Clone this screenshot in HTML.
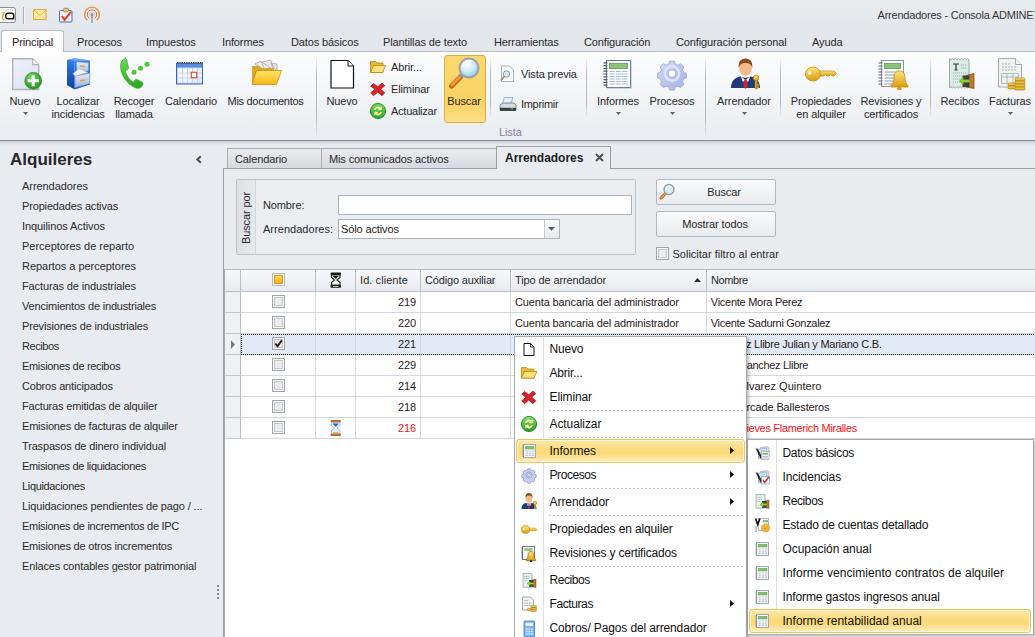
<!DOCTYPE html>
<html lang="es">
<head>
<meta charset="utf-8">
<title>Arrendadores - Consola ADMINET</title>
<style>
*{box-sizing:border-box;margin:0;padding:0}
html,body{width:1035px;height:637px;overflow:hidden}
body{position:relative;background:#e8ebef;font-family:"Liberation Sans",sans-serif;font-size:11px;color:#1f2022;letter-spacing:-0.12px;line-height:13px}
.a{position:absolute;white-space:nowrap}
svg{position:absolute;overflow:visible}
/* title + ribbon */
#title{left:0;top:0;width:1035px;height:30px;background:linear-gradient(#e9ecef,#e3e6ea)}
#tabs{left:0;top:30px;width:1035px;height:22px;background:#e3e6ea;border-bottom:1px solid #b9bdc3}
#tabP{left:1px;top:30px;width:63px;height:23px;background:#fdfdfe;border:1px solid #b9bdc3;border-bottom:none;border-radius:3px 3px 0 0}
.rt{top:36px;font-size:11px;color:#2a2b2d}
#ribbon{left:0;top:52px;width:1035px;height:88px;background:linear-gradient(#fdfdfe 0%,#f3f5f7 45%,#e9ecf0 100%)}
#ribline{left:0;top:140px;width:1035px;height:1px;background:#858b93}
#ribline2{left:0;top:141px;width:1035px;height:4px;background:linear-gradient(#c9cdd3,#e8ebef)}
.lb{text-align:center;transform:translateX(-50%);color:#27282a}
.vs{width:1px;background:linear-gradient(rgba(176,180,187,0),#b4b8be 25%,#b4b8be 75%,rgba(176,180,187,0))}
/* sidebar */
#side{left:0;top:145px;width:222px;height:492px;background:#e8ebef}
.si{left:22px;color:#2a2b2d}
/* document area */
#docbg{left:222px;top:145px;width:813px;height:492px;background:#e8ebef}
.dtab{top:148px;height:20px;border:1px solid #a9adb3;border-bottom:none;background:linear-gradient(#e9ebee,#d6d9de);color:#2a2b2d;padding:4px 0 0 7px}
#panel{left:223px;top:168px;width:814px;height:472px;background:#e9ecef;border:1px solid #989fa9}
/* grid */
.gh{top:269px;height:23px;background:linear-gradient(#f7f8fa,#e8ebef);border-right:1px solid #b9bdc4;border-top:1px solid #b9bdc4;border-bottom:1px solid #b9bdc4;padding:4px 0 0 4px;color:#2a2b2d}
.cell{height:21px;border-right:1px solid #d4d7dc;border-bottom:1px solid #d4d7dc;padding:4px 4px 0 4px;background:#fff}
.ind{left:224px;width:17px;height:21px;background:#eef0f3;border-right:1px solid #b9bdc4;border-bottom:1px solid #c3c7cc}
.cb{width:13px;height:13px;border:1px solid #a0a4ab;background:#ececec;box-shadow:inset 0 0 0 1px #f8f8f8,inset 0 0 0 2px #c6c8cb}
/* menus */
.menu{background:#fff;border:1px solid #a7abb0;font-size:12px;letter-spacing:0;color:#111}
.mi{font-size:12px;letter-spacing:0;color:#111;line-height:14px}
.msep{height:1px;background:repeating-linear-gradient(90deg,#c4c4c4 0,#c4c4c4 2px,transparent 2px,transparent 4px)}
.hl{border:1px solid #ebc45c;border-radius:3px;background:linear-gradient(#fce8ae 0%,#fbdb80 40%,#fbd977 60%,#fdeec0 100%);box-shadow:inset 0 0 0 1px rgba(255,250,225,.75)}
</style>
</head>
<body>
<!-- TITLE BAR -->
<div class="a" id="title"></div>
<div class="a" style="left:877.5px;top:9px;font-size:11px;color:#34363a;letter-spacing:-0.21px">Arrendadores - Consola ADMINET</div>
<!-- RIBBON TABS -->
<div class="a" id="tabs"></div>
<div class="a" id="tabP"></div>
<div class="a rt" style="left:12px;color:#1f2022">Principal</div>
<div class="a rt" style="left:77px">Procesos</div>
<div class="a rt" style="left:146px">Impuestos</div>
<div class="a rt" style="left:222px">Informes</div>
<div class="a rt" style="left:291px">Datos básicos</div>
<div class="a rt" style="left:383px">Plantillas de texto</div>
<div class="a rt" style="left:494px">Herramientas</div>
<div class="a rt" style="left:584px">Configuración</div>
<div class="a rt" style="left:676px">Configuración personal</div>
<div class="a rt" style="left:812px">Ayuda</div>
<!-- RIBBON BODY -->
<div class="a" id="ribbon"></div>
<div class="a" id="ribline"></div>
<div class="a" id="ribline2"></div>
<!-- large button labels -->
<div class="a lb" style="left:25px;top:95px">Nuevo</div>
<div class="a lb" style="left:78px;top:95px">Localizar<br>incidencias</div>
<div class="a lb" style="left:134px;top:95px">Recoger<br>llamada</div>
<div class="a lb" style="left:191px;top:95px">Calendario</div>
<div class="a lb" style="left:265.500px;top:95px;letter-spacing:-0.3px">Mis documentos</div>
<div class="a vs" style="left:316px;top:55px;height:84px"></div>
<div class="a lb" style="left:342px;top:95px">Nuevo</div>
<div class="a" style="left:391px;top:61px;color:#27282a">Abrir...</div>
<div class="a" style="left:391px;top:83px;color:#27282a">Eliminar</div>
<div class="a" style="left:391px;top:105px;color:#27282a;letter-spacing:-0.25px">Actualizar</div>
<div class="a hl" style="left:444px;top:55px;width:42px;height:68px;border-color:#dcae3e;box-shadow:none;background:linear-gradient(#fcd870 0%,#fbd262 72%,#fcdf8a 100%)"></div>
<div class="a lb" style="left:464px;top:95px">Buscar</div>
<div class="a vs" style="left:490px;top:58px;height:60px"></div>
<div class="a" style="left:521px;top:68px;color:#27282a">Vista previa</div>
<div class="a" style="left:521px;top:98px;color:#27282a;letter-spacing:-0.3px">Imprimir</div>
<div class="a" style="left:499px;top:126px;color:#7b84a0">Lista</div>
<div class="a vs" style="left:586px;top:58px;height:60px"></div>
<div class="a lb" style="left:618px;top:95px">Informes</div>
<div class="a lb" style="left:672px;top:95px">Procesos</div>
<div class="a vs" style="left:705px;top:55px;height:84px"></div>
<div class="a lb" style="left:744px;top:95px">Arrendador</div>
<div class="a vs" style="left:780px;top:58px;height:60px"></div>
<div class="a lb" style="left:821px;top:95px">Propiedades<br>en alquiler</div>
<div class="a lb" style="left:891px;top:95px">Revisiones y<br>certificados</div>
<div class="a vs" style="left:930px;top:58px;height:60px"></div>
<div class="a lb" style="left:960px;top:95px">Recibos</div>
<div class="a lb" style="left:1010px;top:95px">Facturas</div>
<!-- dropdown arrows -->
<svg style="left:22px;top:112px" width="7" height="4"><path d="M1 0h5L3.500 3z" fill="#5d6065"/></svg>
<svg style="left:615px;top:112px" width="7" height="4"><path d="M1 0h5L3.500 3z" fill="#5d6065"/></svg>
<svg style="left:669px;top:112px" width="7" height="4"><path d="M1 0h5L3.500 3z" fill="#5d6065"/></svg>
<svg style="left:741px;top:112px" width="7" height="4"><path d="M1 0h5L3.500 3z" fill="#5d6065"/></svg>
<svg style="left:1007px;top:112px" width="7" height="4"><path d="M1 0h5L3.500 3z" fill="#5d6065"/></svg>
<svg style="left:0;top:0" width="1035" height="141" viewBox="0 0 1035 141">
<defs>
<linearGradient id="gGreen" x1="0" y1="0" x2="0" y2="1"><stop offset="0" stop-color="#6fdc58"/><stop offset="1" stop-color="#27a41e"/></linearGradient>
<linearGradient id="gFold" x1="0" y1="0" x2="0" y2="1"><stop offset="0" stop-color="#ffe968"/><stop offset="1" stop-color="#f4b516"/></linearGradient>
<linearGradient id="gCab" x1="0" y1="0" x2="0" y2="1"><stop offset="0" stop-color="#3b8aea"/><stop offset="1" stop-color="#1254bc"/></linearGradient>
<linearGradient id="gDraw" x1="0" y1="0" x2="0" y2="1"><stop offset="0" stop-color="#e8eefa"/><stop offset="1" stop-color="#9fb4dc"/></linearGradient>
<radialGradient id="gLens" cx=".4" cy=".35" r=".7"><stop offset="0" stop-color="#ffffff"/><stop offset=".6" stop-color="#c5e6f8"/><stop offset="1" stop-color="#8cc4e8"/></radialGradient>
<linearGradient id="gGear" x1="0" y1="0" x2="1" y2="1"><stop offset="0" stop-color="#d3dbf5"/><stop offset="1" stop-color="#a3b1e2"/></linearGradient>
<linearGradient id="gGold" x1="0" y1="0" x2="0" y2="1"><stop offset="0" stop-color="#ffe680"/><stop offset="1" stop-color="#d99a10"/></linearGradient>
<linearGradient id="gCal" x1="0" y1="0" x2="1" y2="1"><stop offset="0" stop-color="#ffffff"/><stop offset="1" stop-color="#9bbcf0"/></linearGradient>
<radialGradient id="gGreen2" cx=".4" cy=".3" r=".8"><stop offset="0" stop-color="#7fd66c"/><stop offset=".6" stop-color="#3aa832"/><stop offset="1" stop-color="#1f8a1c"/></radialGradient>
<linearGradient id="gCabL" x1="0" y1="0" x2="0" y2="1"><stop offset="0" stop-color="#2f83e6"/><stop offset="1" stop-color="#0a3f9c"/></linearGradient>
<linearGradient id="gPage" x1="0" y1="0" x2="1" y2="1"><stop offset="0" stop-color="#eef0fa"/><stop offset="1" stop-color="#dde0f2"/></linearGradient>
</defs>
<!-- QAT icons -->
<rect x="-3" y="7.500" width="18.500" height="15" rx="2" fill="#fcfcfc" stroke="#8c8e92"/>
<rect x="5.800" y="13.200" width="8" height="5.600" rx="2.300" fill="none" stroke="#1a1a1a" stroke-width="1.400"/>
<path d="M12.500 18.800h2" stroke="#1a1a1a" stroke-width="1.200"/>
<circle cx="3.600" cy="12.600" r="1.200" fill="#f0a63a"/>
<path d="M3.600 14c-1.600 1.500-1.600 4.500.2 6" fill="none" stroke="#f0a63a" stroke-width="1.500" stroke-linecap="round"/>
<path d="M5.800 10.600a7 7 0 0 1 8.200.6" fill="none" stroke="#8a8c90" stroke-width="1" stroke-dasharray=".9 1.300"/>
<rect x="23" y="7" width="1" height="17" fill="#a9adb3"/><rect x="24" y="7" width="1" height="17" fill="#f3f4f6"/>
<rect x="33.500" y="9.500" width="12.500" height="10" fill="#fdeaa2" stroke="#d6aa40"/>
<path d="M34 10l6 5.500l6-5.500" fill="none" stroke="#d6aa40" stroke-width=".9"/>
<path d="M34 19.300l4.500-4M46 19.300l-4.500-4" fill="none" stroke="#e8c976" stroke-width=".7"/>
<rect x="59.500" y="10.500" width="12.500" height="11.500" rx="1" fill="#e6edf8" stroke="#4f6fae"/>
<rect x="63.500" y="8.300" width="5" height="3.400" rx="1" fill="#e3c98a" stroke="#8f7a3c" stroke-width=".8"/>
<path d="M61.800 16l2.800 3.800l6.300-8" fill="none" stroke="#e8401c" stroke-width="2.100"/>
<path d="M87.300 20.200a7.400 7.400 0 1 1 9.400 0" fill="none" stroke="#f0913c" stroke-width="1.400"/>
<path d="M89.200 18.300a4.700 4.700 0 1 1 5.600 0" fill="none" stroke="#ea6a4c" stroke-width="1"/>
<circle cx="92" cy="14.700" r="2.500" fill="none" stroke="#c9c9c9" stroke-width=".8"/>
<circle cx="92" cy="14.700" r="1.400" fill="#8e8e8e"/>
<rect x="91.200" y="15" width="1.600" height="8" fill="#a2a2a2"/>
<!-- Nuevo (page + plus) -->
<path d="M12.700 58.700h20l6 6v24.800h-26z" fill="url(#gPage)" stroke="#b1b2b8" stroke-width="1.400"/>
<path d="M32.700 58.700v6h6" fill="#f7f7fb" stroke="#b1b2b8" stroke-width="1.200"/>
<circle cx="33.200" cy="80.800" r="8.400" fill="url(#gGreen2)" stroke="#2d9427" stroke-width=".8"/>
<path d="M33.200 75.300v11M27.700 80.800h11" stroke="#fff" stroke-width="3"/>
<!-- file cabinet -->
<path d="M67 60l7.500-1.700v31.200l-7.500-4.500z" fill="url(#gCabL)"/>
<path d="M74.500 58.300l15.500 2.200v24l-15.500 5z" fill="url(#gCab)"/>
<path d="M67 60l7.500-1.700l15.500 2.200l-8 .8z" fill="#6aa6ee"/>
<path d="M76.500 61.800l12 1v8.200l-12 2z" fill="url(#gDraw)" stroke="#6a86bc" stroke-width=".5"/>
<path d="M75 76l14.800-2.800v10.300L75 87.800z" fill="url(#gDraw)" stroke="#6a86bc" stroke-width=".5"/>
<path d="M73 73.500l6-4.500l9 3.500l-13 3.500z" fill="#f4f7fc" stroke="#b5c4e0" stroke-width=".4"/>
<path d="M80 65.300l5 .4v1.500l-5-.4z" fill="#e0a63a"/><path d="M80 80l5.500-1v1.600l-5.500 1z" fill="#e0a63a"/>
<!-- phone -->
<path d="M126 58c-3.500 1-5.500 4-5.500 8c0 9 7 19 15.500 22c3 1 6-.5 7-3.500c.3-1.200-.3-2.200-1.500-2.800l-4-2c-1.200-.5-2.300-.2-3 .8l-1.200 1.800c-3.500-2-7-7-8-11.500l2-1c1-.6 1.400-1.600 1-2.800l-1.300-6.500c-.3-1.400-1-2-2-2.500z" fill="url(#gGreen)" stroke="#2aa81e" stroke-width=".6"/>
<circle cx="134" cy="72.300" r="2.500" fill="#4cc93a"/><circle cx="140.500" cy="68.300" r="2.500" fill="#4cc93a"/><circle cx="147" cy="64.300" r="2.500" fill="#4cc93a"/>
<!-- calendar -->
<rect x="176.500" y="63.500" width="26" height="20.500" fill="#c3d5f4" stroke="#3a62b5"/>
<rect x="177" y="64" width="25" height="3.500" fill="#5a8de0"/>
<path d="M177 62.500h26" stroke="#222" stroke-width="1.200" stroke-dasharray="1.300 1"/>
<rect x="178" y="68.5" width="4" height="4" fill="#fff" opacity="0.95"/><rect x="178" y="73.5" width="4" height="4" fill="#fff" opacity="0.87"/><rect x="178" y="78.5" width="4" height="4" fill="#fff" opacity="0.7899999999999999"/><rect x="183" y="68.5" width="4" height="4" fill="#fff" opacity="0.87"/><rect x="183" y="73.5" width="4" height="4" fill="#fff" opacity="0.7899999999999999"/><rect x="183" y="78.5" width="4" height="4" fill="#fff" opacity="0.71"/><rect x="188" y="68.5" width="4" height="4" fill="#fff" opacity="0.7899999999999999"/><rect x="188" y="73.5" width="4" height="4" fill="#fff" opacity="0.71"/><rect x="188" y="78.5" width="4" height="4" fill="#fff" opacity="0.6299999999999999"/><rect x="193" y="68.5" width="4" height="4" fill="#fff" opacity="0.71"/><rect x="193" y="73.5" width="4" height="4" fill="#fff" opacity="0.6299999999999999"/><rect x="193" y="78.5" width="4" height="4" fill="#fff" opacity="0.5499999999999999"/><rect x="198" y="68.5" width="4" height="4" fill="#fff" opacity="0.6299999999999999"/><rect x="198" y="73.5" width="4" height="4" fill="#fff" opacity="0.5499999999999999"/><rect x="198" y="78.5" width="4" height="4" fill="#fff" opacity="0.47"/>
<rect x="191.300" y="72.300" width="5.400" height="5.400" fill="#fff" stroke="#e0481a" stroke-width="1.100"/>
<!-- Mis documentos folder -->
<path d="M255 64l6-3l4 9zM262 62l9-2l2 10zM271 63l6 1v8z" fill="#e9e9e9" stroke="#9c9c9c" stroke-width=".7"/>
<path d="M252 66h7l2 2h13v16h-22z" fill="#e0a524"/>
<path d="M256.500 70.500h25l-5 14h-24.500z" fill="url(#gFold)" stroke="#c88d12" stroke-width=".8"/>
<!-- blank page -->
<path d="M331 60.500h17l5.500 5.500v22h-22.500z" fill="#fff" stroke="#111" stroke-width="1.200"/>
<path d="M348 60.500v5.500h5.500" fill="#fff" stroke="#111" stroke-width="1"/>
<!-- small: open folder, X, refresh -->
<path d="M370.500 61.500h5l1.500 1.500h6v9.500h-12.500z" fill="#e9b93a" stroke="#b8860b" stroke-width=".8"/>
<path d="M373.500 65.500h12l-3 7h-12z" fill="#ffe27a" stroke="#b8860b" stroke-width=".8"/>
<path d="M373.500 83.500l4.300 3.300l4.200-3.800l2.800 2.800l-4.200 3.500l4.200 3.500l-2.800 3l-4.200-3.700l-4.300 3.700l-2.800-3l4.300-3.500l-4.300-3z" fill="#d8232a" stroke="#9e1218" stroke-width=".7"/>
<circle cx="378" cy="111" r="7.600" fill="url(#gGreen)" stroke="#1e8a1a" stroke-width=".9"/>
<path d="M374 110c.5-3 4-4.500 6.500-2.500l1.200-1.200v4h-4l1.300-1.300c-1.500-1-3-.3-3.300 1zM382 112c-.5 3-4 4.500-6.500 2.500l-1.200 1.200v-4h4l-1.300 1.300c1.500 1 3 .3 3.300-1z" fill="#fff7b0"/>
<!-- magnifier -->
<path d="M461 76.500l-9.500 9.500" stroke="#b4631a" stroke-width="5" stroke-linecap="round"/>
<path d="M460.500 76.500l-8.500 8.500" stroke="#f59a2e" stroke-width="3" stroke-linecap="round"/>
<path d="M463 74l-3 3" stroke="#8f9499" stroke-width="3.500"/>
<circle cx="469" cy="68" r="9.500" fill="url(#gLens)" stroke="#9aa3ad" stroke-width="2"/>
<path d="M463 66a6.500 6.500 0 0 1 8-5" fill="none" stroke="#fff" stroke-width="1.800" stroke-linecap="round"/>
<!-- vista previa -->
<path d="M501.500 66h8l4 4v11.500h-12z" fill="#fafbfc" stroke="#a5a9b0" stroke-width=".9"/>
<circle cx="506.500" cy="74" r="3.200" fill="#d4ebfa" stroke="#8f98a3" stroke-width="1"/>
<path d="M504.300 76.500l-3.500 4" stroke="#9a8a78" stroke-width="1.600"/>
<!-- printer -->
<path d="M504.500 97.500h8.500l-2.500 7h-8.500z" fill="#e8f1fb" stroke="#7fa2d4" stroke-width=".8"/>
<path d="M500 105l3-2h11l2 2v5.500h-16z" fill="#d9dbde" stroke="#6e7278" stroke-width=".8"/>
<rect x="500" y="107.800" width="16" height="3" fill="#3c3f44"/>
<rect x="511.500" y="108" width="1.500" height="1.200" fill="#58d044"/>
<!-- Informes notebook -->
<rect x="606.500" y="60.500" width="24" height="27" fill="#fbfcfd" stroke="#66758e"/>
<path d="M631.300 61.500v26.800h-24" fill="none" stroke="#b9c0cb" stroke-width=".8"/>
<rect x="609.500" y="63.500" width="18" height="5" fill="#8cc27c" stroke="#5c9a4e" stroke-width=".8"/>
<path d="M609.500 71.500h18M609.500 74h18M609.500 76.500h18M609.500 79h18M609.500 81.500h18M609.500 84h18" stroke="#a9b8d2" stroke-width="1.100"/>
<path d="M615.300 70.500v14.500M621.300 70.500v14.500" stroke="#fbfcfd" stroke-width="1"/>
<path d="M603.500 62.800h4M603.500 65.600h4M603.500 68.400h4M603.500 71.200h4M603.500 74h4M603.500 76.800h4M603.500 79.600h4M603.500 82.400h4M603.500 85.200h4" stroke="#4e5563" stroke-width="1.200"/>
<!-- gear -->
<g transform="translate(672 73.500) scale(.8)">
<path id="gearp" d="M-3-15.500h6l1 3.700a11.500 11.500 0 0 1 3.400 1.400l3.300-1.900l4.300 4.300l-1.900 3.300a11.500 11.500 0 0 1 1.400 3.400l3.700 1v6l-3.700 1a11.500 11.500 0 0 1-1.400 3.400l1.900 3.300l-4.300 4.300l-3.300-1.900a11.500 11.500 0 0 1-3.400 1.400l-1 3.700h-6l-1-3.700a11.500 11.500 0 0 1-3.400-1.400l-3.300 1.900l-4.300-4.300l1.900-3.300a11.500 11.500 0 0 1-1.400-3.400l-3.700-1v-6l3.700-1a11.500 11.500 0 0 1 1.400-3.400l-1.900-3.300l4.300-4.300l3.300 1.900a11.500 11.500 0 0 1 3.400-1.400z" fill="url(#gGear)" stroke="#8f9ed6" stroke-width=".8"/>
<circle r="9" fill="none" stroke="#dfe5f8" stroke-width="3"/>
<circle r="4.800" fill="#fff" stroke="#8f9ed6" stroke-width=".9"/>
</g>
<!-- Arrendador person -->
<path d="M731 88c0-7 4-10.500 9-11.500l5.500 1.500l5.500-1.500c5 1 9 4.500 9 11.500z" fill="#1f3a7a"/>
<path d="M741 76.500l4.500 3.500l4.500-3.500l-1.500 5h-6z" fill="#fff"/>
<path d="M744.300 79.500h2.400l1 7l-2.200 2.300l-2.200-2.300z" fill="#d3202a"/>
<ellipse cx="745.500" cy="68.500" rx="6.300" ry="7.500" fill="#f2b98a"/>
<path d="M738.800 68c-.8-6 2-9.500 6.700-9.500s7.500 3.500 6.700 9.500c-1-3.500-2.500-5-6.700-5s-5.700 1.500-6.700 5z" fill="#8a4a1c"/>
<circle cx="756" cy="78" r="2.800" fill="url(#gGold)" stroke="#a97808" stroke-width=".7"/>
<path d="M755 80.500h2.200v8.500h-2.200zM757 84h2v1.500h-2zM757 86.500h2v1.500h-2z" fill="#e0a818" stroke="#a97808" stroke-width=".4"/>
<!-- key -->
<ellipse cx="813" cy="74" rx="7.500" ry="7" fill="url(#gGold)" stroke="#c4900e" stroke-width=".8"/>
<circle cx="809.500" cy="73" r="1.800" fill="#fff8dc"/>
<path d="M820 71h14l2.500 2.500l-2.500 2.500h-2l-1.500-1.500l-1.500 1.500h-2l-1.500-1.500l-1.500 1.500h-4z" fill="url(#gGold)" stroke="#c4900e" stroke-width=".7"/>
<!-- Revisiones notebook + bell -->
<rect x="881.500" y="60.500" width="22" height="26" fill="#fafbfc" stroke="#8e939b"/>
<rect x="884.500" y="63.500" width="16" height="5" fill="#8cc27c" stroke="#5c9a4e" stroke-width=".8"/>
<path d="M884.500 72h16M884.500 75h16M884.500 78h16M884.500 81h16M884.500 84h16" stroke="#b6bbc4" stroke-width="1.300"/>
<path d="M878.500 63h4M878.500 66h4M878.500 69h4M878.500 72h4M878.500 75h4M878.500 78h4M878.500 81h4M878.500 84h4" stroke="#5f646c" stroke-width="1.100"/>
<path d="M899.500 71c4 0 5.500 3 5.500 7c0 4 1 5.500 3 7.500v1.500h-17v-1.500c2-2 3-3.500 3-7.500c0-4 1.500-7 5.500-7z" fill="url(#gGold)" stroke="#c4900e" stroke-width=".8"/>
<ellipse cx="899.500" cy="88.500" rx="2.300" ry="1.700" fill="#d99a10"/>
<!-- Recibos -->
<path d="M949.500 58.500l1.500 1.200l1.500-1.200l1.500 1.200l1.500-1.200l1.500 1.200l1.500-1.200l1.500 1.200l1.500-1.200l1.500 1.200l1.500-1.200l1.500 1.200l1.500-1.200l1.500 1.200v27l-1.500 1.200l-1.500-1.200l-1.500 1.200l-1.500-1.200l-1.500 1.200l-1.500-1.200l-1.500 1.200l-1.500-1.200l-1.500 1.200l-1.500-1.200l-1.500 1.200l-1.500-1.200l-1.500 1.200z" fill="#dcebe6" stroke="#7f9a94" stroke-width=".8"/>
<path d="M953 64h6M956 64v6M954.500 70h3" stroke="#333" stroke-width="1.200"/>
<path d="M961 65h6M961 68h6M953 73h14M953 76h10M953 79h10M953 82h10" stroke="#9bb5ae" stroke-width="1.100" stroke-dasharray="1.200 .8"/>
<path d="M966 75.500l8-2v15l-8-1.500z" fill="#c47a2e" stroke="#7c4310" stroke-width=".7"/>
<rect x="962.500" y="75.500" width="7" height="11.500" fill="#3a3f47"/>
<path d="M971 81h-6.500v-2.500l-4 4l4 4v-2.500h6.500z" fill="#8fd02c" stroke="#4f8a10" stroke-width=".6" transform="translate(-1 -1.500)"/>
<!-- Facturas -->
<path d="M998.500 58.500h17l6 6v22.500h-23z" fill="#eef2f1" stroke="#9aa5a3" stroke-width=".9"/>
<path d="M1015.500 58.500v6h6" fill="#fff" stroke="#9aa5a3" stroke-width=".9"/>
<path d="M1002 64h9M1002 67h15M1002 70h15" stroke="#aab5b2" stroke-width="1" stroke-dasharray="2 1"/>
<path d="M1001.500 73.500h17v10h-17zM1001.500 77h17M1007 73.500v10M1013 73.500v10" fill="none" stroke="#aab5b2" stroke-width=".9"/>
<g fill="url(#gGold)" stroke="#a97808" stroke-width=".6"><rect x="1008" y="86" width="9" height="3" rx="1"/><rect x="1008" y="83" width="9" height="3" rx="1"/><rect x="1015" y="87" width="10" height="3" rx="1"/><rect x="1015" y="84" width="10" height="3" rx="1"/><rect x="1015" y="81" width="10" height="3" rx="1"/><rect x="1015" y="78" width="10" height="3" rx="1"/></g>
</svg>


<!-- SIDEBAR -->
<div class="a" id="side"></div>
<div class="a" style="left:10px;top:150px;font-size:17px;font-weight:bold;color:#26272a;letter-spacing:0px;line-height:20px">Alquileres</div>
<svg style="left:196px;top:156px" width="6" height="7"><path d="M4.800 0.300L1.300 3.500L4.800 6.700" fill="none" stroke="#4a4d52" stroke-width="2"/></svg>
<div class="a si" style="top:180px;letter-spacing:-0.06px">Arrendadores</div>
<div class="a si" style="top:200px;letter-spacing:-0.16px">Propiedades activas</div>
<div class="a si" style="top:220px;letter-spacing:-0.08px">Inquilinos Activos</div>
<div class="a si" style="top:240px;letter-spacing:-0.02px">Perceptores de reparto</div>
<div class="a si" style="top:260px;letter-spacing:-0.04px">Repartos a perceptores</div>
<div class="a si" style="top:280px;letter-spacing:-0.12px">Facturas de industriales</div>
<div class="a si" style="top:300px;letter-spacing:-0.19px">Vencimientos de industriales</div>
<div class="a si" style="top:320px;letter-spacing:-0.18px">Previsiones de industriales</div>
<div class="a si" style="top:340px;letter-spacing:-0.41px">Recibos</div>
<div class="a si" style="top:360px;letter-spacing:-0.32px">Emisiones de recibos</div>
<div class="a si" style="top:380px;letter-spacing:-0.19px">Cobros anticipados</div>
<div class="a si" style="top:400px;letter-spacing:-0.18px">Facturas emitidas de alquiler</div>
<div class="a si" style="top:420px;letter-spacing:-0.19px">Emisiones de facturas de alquiler</div>
<div class="a si" style="top:440px;letter-spacing:-0.16px">Traspasos de dinero individual</div>
<div class="a si" style="top:460px;letter-spacing:-0.34px">Emisiones de liquidaciones</div>
<div class="a si" style="top:480px;letter-spacing:-0.34px">Liquidaciones</div>
<div class="a si" style="top:500px;letter-spacing:-0.13px">Liquidaciones pendientes de pago / ...</div>
<div class="a si" style="top:520px;letter-spacing:-0.28px">Emisiones de incrementos de IPC</div>
<div class="a si" style="top:540px;letter-spacing:-0.22px">Emisiones de otros incrementos</div>
<div class="a si" style="top:560px;letter-spacing:-0.15px">Enlaces contables gestor patrimonial</div>
<div class="a" style="left:217px;top:585px;width:2px;height:2px;background:#7f8794;box-shadow:0 4px #7f8794,0 8px #7f8794,0 12px #7f8794"></div>

<!-- DOCUMENT AREA -->
<div class="a" id="docbg"></div>
<div class="a" id="panel"></div>
<div class="a dtab" style="left:227px;width:95px">Calendario</div>
<div class="a dtab" style="left:321px;width:176px">Mis comunicados activos</div>
<div class="a" style="left:496px;top:146px;width:115px;height:23px;background:#e9ecef;border:1px solid #9a9ea4;border-bottom:none"></div>
<div class="a" style="left:505px;top:151px;font-size:12px;font-weight:bold;color:#1c1d1f;letter-spacing:-0.03px;line-height:14px">Arrendadores</div>
<svg style="left:595px;top:153px" width="9" height="9"><path d="M1 1L8 8M8 1L1 8" stroke="#4a4d52" stroke-width="1.8"/></svg>
<!-- search group -->
<div class="a" style="left:236px;top:179px;width:400px;height:76px;border:1px solid #bfc3c8;border-radius:2px;background:#ebeef1"></div>
<div class="a" style="left:237px;top:180px;width:19px;height:74px;background:linear-gradient(90deg,#dcdfe3,#e6e9ec);border-right:1px solid #d3d6da"></div>
<div class="a" style="left:240px;top:244px;transform:rotate(-90deg);transform-origin:0 0;color:#2a2b2d">Buscar por</div>
<div class="a" style="left:263px;top:199px;color:#2a2b2d">Nombre:</div>
<div class="a" style="left:338px;top:195px;width:294px;height:20px;background:#fff;border:1px solid #aeb2b8"></div>
<div class="a" style="left:263px;top:223px;color:#2a2b2d;letter-spacing:0.03px">Arrendadores:</div>
<div class="a" style="left:338px;top:219px;width:222px;height:20px;background:#fff;border:1px solid #aeb2b8"></div>
<div class="a" style="left:341px;top:223px;color:#1f2022">Sólo activos</div>
<div class="a" style="left:544px;top:220px;width:15px;height:18px;background:linear-gradient(#fcfcfd,#e6e8eb);border-left:1px solid #c6c9ce"></div>
<svg style="left:548px;top:227px" width="7" height="4"><path d="M0 0h7L3.500 3.800z" fill="#54575c"/></svg>
<!-- buttons -->
<div class="a" style="left:656px;top:179px;width:120px;height:26px;border:1px solid #b4b8be;border-radius:2px;background:linear-gradient(#fbfbfc,#e8eaed)"></div>
<div class="a lb" style="left:724px;top:186px">Buscar</div>
<svg style="left:659px;top:183px" width="17" height="17" viewBox="0 0 17 17"><path d="M6.500 10.500l-4.500 4.500" stroke="#b4631a" stroke-width="3" stroke-linecap="round"/><path d="M6.300 10.700l-4 4" stroke="#f59a2e" stroke-width="1.600" stroke-linecap="round"/><circle cx="10" cy="6.500" r="5" fill="#d9eefb" stroke="#8f98a3" stroke-width="1.300"/><path d="M7 5.500a3.300 3.300 0 0 1 4-2.300" fill="none" stroke="#fff" stroke-width="1.100"/></svg>
<div class="a" style="left:656px;top:211px;width:120px;height:26px;border:1px solid #b4b8be;border-radius:2px;background:linear-gradient(#fbfbfc,#e8eaed)"></div>
<div class="a lb" style="left:715px;top:218px">Mostrar todos</div>
<div class="a cb" style="left:656px;top:247px"></div>
<div class="a" style="left:672.5px;top:248px;color:#2a2b2d;letter-spacing:0px">Solicitar filtro al entrar</div>

<div class="a" style="left:224px;top:269px;width:811px;height:368px;background:#fff"></div>
<div class="a gh" style="left:224px;width:17px;"></div>
<div class="a gh" style="left:241px;width:75px;"></div>
<div class="a gh" style="left:316px;width:40px;"></div>
<div class="a gh" style="left:356px;width:65px;letter-spacing:0.07px;">Id. cliente</div>
<div class="a gh" style="left:421px;width:90px;letter-spacing:-0.16px;">Código auxiliar</div>
<div class="a gh" style="left:511px;width:196px;letter-spacing:-0.12px;">Tipo de arrendador</div>
<div class="a gh" style="left:707px;width:329px;letter-spacing:-0.42px;">Nombre</div>
<div class="a ind" style="top:292px"></div>
<div class="a cell" style="left:241px;top:292px;width:75px;background:#fff;color:#1f2022;"></div>
<div class="a cell" style="left:316px;top:292px;width:40px;background:#fff;color:#1f2022;"></div>
<div class="a cell" style="left:356px;top:292px;width:65px;background:#fff;color:#1f2022;text-align:right;">219</div>
<div class="a cell" style="left:421px;top:292px;width:90px;background:#fff;color:#1f2022;"></div>
<div class="a cell" style="left:511px;top:292px;width:196px;background:#fff;color:#1f2022;letter-spacing:-0.13px;">Cuenta bancaria del administrador</div>
<div class="a cell" style="left:707px;top:292px;width:329px;background:#fff;color:#1f2022;"></div>
<div class="a" style="right:232.7px;top:296px;color:#1f2022;letter-spacing:-0.27px">Vicente Mora Perez</div>
<div class="a cb" style="left:272px;top:295px"></div>
<div class="a ind" style="top:313px"></div>
<div class="a cell" style="left:241px;top:313px;width:75px;background:#fff;color:#1f2022;"></div>
<div class="a cell" style="left:316px;top:313px;width:40px;background:#fff;color:#1f2022;"></div>
<div class="a cell" style="left:356px;top:313px;width:65px;background:#fff;color:#1f2022;text-align:right;">220</div>
<div class="a cell" style="left:421px;top:313px;width:90px;background:#fff;color:#1f2022;"></div>
<div class="a cell" style="left:511px;top:313px;width:196px;background:#fff;color:#1f2022;letter-spacing:-0.13px;">Cuenta bancaria del administrador</div>
<div class="a cell" style="left:707px;top:313px;width:329px;background:#fff;color:#1f2022;"></div>
<div class="a" style="right:204.7px;top:317px;color:#1f2022;letter-spacing:-0.31px">Vicente Sadurni Gonzalez</div>
<div class="a cb" style="left:272px;top:316px"></div>
<div class="a ind" style="top:334px"></div>
<div class="a cell" style="left:241px;top:334px;width:75px;background:#e1eaf6;color:#1f2022;"></div>
<div class="a cell" style="left:316px;top:334px;width:40px;background:#e1eaf6;color:#1f2022;"></div>
<div class="a cell" style="left:356px;top:334px;width:65px;background:#e1eaf6;color:#1f2022;text-align:right;">221</div>
<div class="a cell" style="left:421px;top:334px;width:90px;background:#e1eaf6;color:#1f2022;"></div>
<div class="a cell" style="left:511px;top:334px;width:196px;background:#e1eaf6;color:#1f2022;letter-spacing:-0.13px;">Cuenta bancaria del administrador</div>
<div class="a cell" style="left:707px;top:334px;width:329px;background:#e1eaf6;color:#1f2022;"></div>
<div class="a" style="right:153.4px;top:338px;color:#1f2022;letter-spacing:-0.25px">Sanchez Llibre Julian y Mariano C.B.</div>
<div class="a cb" style="left:272px;top:337px"></div>
<div class="a ind" style="top:355px"></div>
<div class="a cell" style="left:241px;top:355px;width:75px;background:#fff;color:#1f2022;"></div>
<div class="a cell" style="left:316px;top:355px;width:40px;background:#fff;color:#1f2022;"></div>
<div class="a cell" style="left:356px;top:355px;width:65px;background:#fff;color:#1f2022;text-align:right;">229</div>
<div class="a cell" style="left:421px;top:355px;width:90px;background:#fff;color:#1f2022;"></div>
<div class="a cell" style="left:511px;top:355px;width:196px;background:#fff;color:#1f2022;letter-spacing:-0.13px;">Cuenta bancaria del administrador</div>
<div class="a cell" style="left:707px;top:355px;width:329px;background:#fff;color:#1f2022;"></div>
<div class="a" style="right:226.9px;top:359px;color:#1f2022;letter-spacing:-0.31px">Julian Sanchez Llibre</div>
<div class="a cb" style="left:272px;top:358px"></div>
<div class="a ind" style="top:376px"></div>
<div class="a cell" style="left:241px;top:376px;width:75px;background:#fff;color:#1f2022;"></div>
<div class="a cell" style="left:316px;top:376px;width:40px;background:#fff;color:#1f2022;"></div>
<div class="a cell" style="left:356px;top:376px;width:65px;background:#fff;color:#1f2022;text-align:right;">214</div>
<div class="a cell" style="left:421px;top:376px;width:90px;background:#fff;color:#1f2022;"></div>
<div class="a cell" style="left:511px;top:376px;width:196px;background:#fff;color:#1f2022;letter-spacing:-0.13px;">Cuenta bancaria del administrador</div>
<div class="a cell" style="left:707px;top:376px;width:329px;background:#fff;color:#1f2022;"></div>
<div class="a" style="right:213.5px;top:380px;color:#1f2022;letter-spacing:0.03px">Rosa Alvarez Quintero</div>
<div class="a cb" style="left:272px;top:379px"></div>
<div class="a ind" style="top:397px"></div>
<div class="a cell" style="left:241px;top:397px;width:75px;background:#fff;color:#1f2022;"></div>
<div class="a cell" style="left:316px;top:397px;width:40px;background:#fff;color:#1f2022;"></div>
<div class="a cell" style="left:356px;top:397px;width:65px;background:#fff;color:#1f2022;text-align:right;">218</div>
<div class="a cell" style="left:421px;top:397px;width:90px;background:#fff;color:#1f2022;"></div>
<div class="a cell" style="left:511px;top:397px;width:196px;background:#fff;color:#1f2022;letter-spacing:-0.13px;">Cuenta bancaria del administrador</div>
<div class="a cell" style="left:707px;top:397px;width:329px;background:#fff;color:#1f2022;"></div>
<div class="a" style="right:205.5px;top:401px;color:#1f2022;letter-spacing:-0.12px">Luis Mercade Ballesteros</div>
<div class="a cb" style="left:272px;top:400px"></div>
<div class="a ind" style="top:418px"></div>
<div class="a cell" style="left:241px;top:418px;width:75px;background:#fff;color:#fa0f14;"></div>
<div class="a cell" style="left:316px;top:418px;width:40px;background:#fff;color:#fa0f14;"></div>
<div class="a cell" style="left:356px;top:418px;width:65px;background:#fff;color:#fa0f14;text-align:right;">216</div>
<div class="a cell" style="left:421px;top:418px;width:90px;background:#fff;color:#fa0f14;"></div>
<div class="a cell" style="left:511px;top:418px;width:196px;background:#fff;color:#fa0f14;letter-spacing:-0.13px;">Cuenta bancaria del administrador</div>
<div class="a cell" style="left:707px;top:418px;width:329px;background:#fff;color:#fa0f14;"></div>
<div class="a" style="right:178.0px;top:422px;color:#fa0f14;letter-spacing:-0.31px">Maria Nieves Flamerich Miralles</div>
<div class="a cb" style="left:272px;top:421px"></div>
<div class="a" style="left:224px;top:269px;width:1px;height:368px;background:#a3aab5"></div>
<div class="a" style="left:272px;top:273px;width:13px;height:13px;border:1px solid #b7bbc1;background:#f6f6f6"></div>
<div class="a" style="left:274px;top:275px;width:9px;height:9px;border:1px solid #e2981a;background:linear-gradient(#ffd95e,#f9ad1c)"></div>
<svg style="left:694px;top:278px" width="7" height="4"><path d="M0 4h7L3.5 0z" fill="#2a2b2d"/></svg>
<div class="a" style="left:241px;top:334px;width:795px;height:21px;border:1px dotted #111"></div>
<svg style="left:231px;top:340px" width="4" height="9"><path d="M0 0L4 4.5L0 9z" fill="#777b80"/></svg>
<svg style="left:274px;top:339px" width="9" height="9"><path d="M1.300 4.500L3.600 7.200L7.800 1.300" fill="none" stroke="#1a1a1a" stroke-width="1.900"/></svg>
<svg style="left:0;top:0" width="1035" height="637" viewBox="0 0 1035 637">
<!-- header hourglass (black) -->
<g transform="translate(330 272)">
<rect x=".5" y=".5" width="10.500" height="2.500" rx="1" fill="#1a1a1a"/>
<rect x=".5" y="13" width="10.500" height="2.800" rx="1" fill="#1a1a1a"/>
<path d="M1.500 3h8.500v2.500L7 8l3 2.500V13H1.500v-2.500L4.500 8L1.500 5.500z" fill="#fafafa" stroke="#1a1a1a" stroke-width="1.100"/>
<path d="M2.800 4h6L5.800 7z" fill="#1a1a1a"/>
<rect x="3" y="14" width="5.500" height="1" fill="#bdbdbd"/>
</g>
<!-- row hourglass (colour) -->
<g transform="translate(330 420)">
<rect x=".5" y="0" width="10.500" height="2.300" rx="1" fill="#c9652a"/>
<rect x=".5" y="13.500" width="10.500" height="2.500" rx="1" fill="#c9652a"/>
<path d="M1.500 2.500h8.500v3L7 8l3 2.500v3H1.500v-3L4.500 8L1.500 5.500z" fill="#e9f1fb" stroke="#9fb4d4" stroke-width=".9"/>
<path d="M2.600 3.500h6.300L5.800 7z" fill="#2f62c8"/>
<rect x="3" y="12" width="5.500" height="1.500" fill="#d9b45a"/>
</g>
</svg>


<div class="a menu" style="left:514px;top:336px;width:233px;height:310px;box-shadow:2px 2px 3px rgba(0,0,0,.25)"></div>
<div class="a" style="left:515px;top:337px;width:29px;height:300px;background:#fff;border-right:1px solid #e0e0e0"></div>
<div class="a hl" style="left:516px;top:439px;width:229px;height:24px"></div>
<div class="a mi" style="left:549.5px;top:342px;letter-spacing:-0.20px">Nuevo</div>
<div class="a mi" style="left:549.5px;top:366px;letter-spacing:-0.19px">Abrir...</div>
<div class="a mi" style="left:549.5px;top:390px;letter-spacing:-0.11px">Eliminar</div>
<div class="a mi" style="left:549.5px;top:417px;letter-spacing:-0.09px">Actualizar</div>
<div class="a mi" style="left:549.5px;top:444px;letter-spacing:-0.01px">Informes</div>
<svg style="left:730px;top:447px" width="4" height="7"><path d="M0 0L4 3.5L0 7z" fill="#111"/></svg>
<div class="a mi" style="left:549.5px;top:468px;letter-spacing:-0.43px">Procesos</div>
<svg style="left:730px;top:471px" width="4" height="7"><path d="M0 0L4 3.5L0 7z" fill="#111"/></svg>
<div class="a mi" style="left:549.5px;top:495px;letter-spacing:-0.05px">Arrendador</div>
<svg style="left:730px;top:498px" width="4" height="7"><path d="M0 0L4 3.5L0 7z" fill="#111"/></svg>
<div class="a mi" style="left:549.5px;top:522px;letter-spacing:-0.13px">Propiedades en alquiler</div>
<div class="a mi" style="left:549.5px;top:546px;letter-spacing:-0.19px">Revisiones y certificados</div>
<div class="a mi" style="left:549.5px;top:573px;letter-spacing:-0.42px">Recibos</div>
<div class="a mi" style="left:549.5px;top:597px;letter-spacing:-0.40px">Facturas</div>
<svg style="left:730px;top:600px" width="4" height="7"><path d="M0 0L4 3.5L0 7z" fill="#111"/></svg>
<div class="a mi" style="left:549.5px;top:621px;letter-spacing:-0.13px">Cobros/ Pagos del arrendador</div>
<div class="a msep" style="left:549px;top:410px;width:194px"></div>
<div class="a msep" style="left:549px;top:437px;width:194px"></div>
<div class="a msep" style="left:549px;top:488px;width:194px"></div>
<div class="a msep" style="left:549px;top:515px;width:194px"></div>
<div class="a msep" style="left:549px;top:566px;width:194px"></div>
<div class="a menu" style="left:746px;top:439px;width:288px;height:196px;border-left:2px solid #9a9c9f;box-shadow:2px 2px 3px rgba(0,0,0,.25)"></div>
<div class="a" style="left:748px;top:440px;width:29px;height:194px;background:#fff;border-right:1px solid #e0e0e0"></div>
<div class="a hl" style="left:749px;top:609px;width:282px;height:24px"></div>
<div class="a mi" style="left:782.5px;top:446px;letter-spacing:-0.30px">Datos básicos</div>
<div class="a mi" style="left:782.5px;top:470px;letter-spacing:-0.14px">Incidencias</div>
<div class="a mi" style="left:782.5px;top:494px;letter-spacing:-0.41px">Recibos</div>
<div class="a mi" style="left:782.5px;top:518px;letter-spacing:-0.21px">Estado de cuentas detallado</div>
<div class="a mi" style="left:782.5px;top:542px;letter-spacing:-0.07px">Ocupación anual</div>
<div class="a mi" style="left:782.5px;top:566px;letter-spacing:0.05px">Informe vencimiento contratos de alquiler</div>
<div class="a mi" style="left:782.5px;top:590px;letter-spacing:-0.12px">Informe gastos ingresos anual</div>
<div class="a mi" style="left:782.5px;top:614px;letter-spacing:0.02px">Informe rentabilidad anual</div>
<svg style="left:0;top:0" width="1035" height="637" viewBox="0 0 1035 637">
<defs>
<linearGradient id="mGreen" x1="0" y1="0" x2="0" y2="1"><stop offset="0" stop-color="#8fe07a"/><stop offset="1" stop-color="#1f9a1a"/></linearGradient>
<linearGradient id="mGold" x1="0" y1="0" x2="0" y2="1"><stop offset="0" stop-color="#ffe680"/><stop offset="1" stop-color="#d99a10"/></linearGradient>
<g id="nb">
<rect x="1.500" y=".5" width="12" height="13" fill="#f6f7f9" stroke="#9a9fa8" stroke-width=".9"/>
<rect x="3.500" y="2.300" width="8.500" height="2.700" fill="#86c172" stroke="#5f9f4e" stroke-width=".5"/>
<path d="M3.500 7h2.200M6.700 7h2.200M9.900 7h2.200M3.500 9.200h2.200M6.700 9.200h2.200M9.900 9.200h2.200M3.500 11.400h2.200M6.700 11.400h2.200M9.900 11.400h2.200" stroke="#b9bec7" stroke-width="1.100"/>
<path d="M.4 2h1.600M.4 4h1.600M.4 6h1.600M.4 8h1.600M.4 10h1.600M.4 12h1.600" stroke="#6a6f78" stroke-width=".8"/>
</g>
<g id="rcb">
<path d="M1.500 1l1 .8l1-.8l1 .8l1-.8l1 .8l1-.8l1 .8l1-.8l1 .8v13l-1 .8l-1-.8l-1 .8l-1-.8l-1 .8l-1-.8l-1 .8l-1-.8l-1 .8z" fill="#e6efec" stroke="#8aa39d" stroke-width=".7"/>
<path d="M3 4.500h5M3 6.500h5M3 8.500h3" stroke="#9bb5ae" stroke-width=".9" stroke-dasharray="1 .6"/>
<path d="M10.500 8l4-1v8.500l-4-.8z" fill="#c47a2e" stroke="#7c4310" stroke-width=".5"/>
<rect x="7.500" y="8" width="4.500" height="6.800" fill="#3a3f47"/>
<path d="M12.500 10.500h-4v-1.600l-2.800 2.600l2.800 2.600v-1.600h4z" fill="#9fd832" stroke="#4f8a10" stroke-width=".5"/>
</g>
<g id="pen">
<path d="M5 2l7-1.500l2 1.500v9.500l-7.500 1.500z" fill="#d5e0ee" stroke="#8fa3bd" stroke-width=".7"/>
<path d="M3.500 3.500l8-1.500v9.500l-8 1.500z" fill="#e6edf6" stroke="#8fa3bd" stroke-width=".7"/>
<path d="M5.500 5l4.500-.8M5.500 6.800l4.500-.8" stroke="#9fb0c6" stroke-width=".7"/>
<path d="M.6 2.300l2.200.8l4.700 8.400l-.3 2l-1.800-1z" fill="#22252b"/>
<path d="M.6 2.300l1.300-.7l1.300 2z" fill="#9aa0aa"/>
<path d="M5.400 11.500l1.800 1l.3 1.800z" fill="#e8e8e8"/>
</g>
</defs>
<!-- main menu icons -->
<path d="M524 343.500h6.500l3.500 3.500v8.500h-10z" fill="#fff" stroke="#111" stroke-width="1"/>
<path d="M530.500 343.500v3.500h3.500" fill="none" stroke="#111" stroke-width=".9"/>
<path d="M521.500 367.500h5l1.500 1.500h6v9h-12.500z" fill="#e9b93a" stroke="#b8860b" stroke-width=".8"/>
<path d="M524.500 371.500h12.500l-3 6.500h-12.500z" fill="#ffe27a" stroke="#b8860b" stroke-width=".8"/>
<path d="M524.500 391.500l4.300 3.300l4.200-3.800l2.800 2.800l-4.200 3.500l4.200 3.500l-2.800 3l-4.200-3.700l-4.300 3.700l-2.800-3l4.300-3.500l-4.300-3z" fill="#d8232a" stroke="#9e1218" stroke-width=".7"/>
<circle cx="529" cy="424" r="7.600" fill="url(#mGreen)" stroke="#1e8a1a" stroke-width=".9"/>
<path d="M525 423c.5-3 4-4.500 6.500-2.500l1.200-1.200v4h-4l1.300-1.300c-1.500-1-3-.3-3.300 1zM533 425c-.5 3-4 4.500-6.500 2.500l-1.200 1.200v-4h4l-1.300 1.300c1.500 1 3 .3 3.300-1z" fill="#fff7b0"/>
<use href="#nb" x="522" y="444"/>
<g transform="translate(529 475) scale(.4)">
<path d="M-3-15.500h6l1 3.700a11.500 11.500 0 0 1 3.400 1.400l3.300-1.900l4.300 4.300l-1.900 3.300a11.500 11.500 0 0 1 1.400 3.400l3.700 1v6l-3.700 1a11.500 11.500 0 0 1-1.400 3.400l1.900 3.300l-4.300 4.300l-3.300-1.900a11.500 11.500 0 0 1-3.400 1.400l-1 3.700h-6l-1-3.700a11.500 11.500 0 0 1-3.400-1.400l-3.300 1.900l-4.300-4.300l1.900-3.300a11.500 11.500 0 0 1-1.400-3.400l-3.700-1v-6l3.700-1a11.500 11.500 0 0 1 1.400-3.400l-1.900-3.300l4.300-4.300l3.300 1.900a11.500 11.500 0 0 1 3.400-1.400z" fill="#c5cff0" stroke="#7f90cc" stroke-width="1.600"/>
<circle r="7.500" fill="none" stroke="#7f90cc" stroke-width="1.600"/><circle r="3.300" fill="#fff" stroke="#7f90cc" stroke-width="1.400"/>
</g>
<!-- person -->
<path d="M521.500 509c0-4 2-5.500 4.500-6l3 .8l3-.8c2.500.5 4.500 2 4.500 6z" fill="#1f3a7a"/>
<path d="M527 503.200l2 1.500l2-1.500l-.7 2.500h-2.600z" fill="#fff"/><path d="M528.500 504.500h1l.5 3.500l-1 1l-1-1z" fill="#d3202a"/>
<ellipse cx="529" cy="498.500" rx="3.300" ry="4" fill="#f2b98a"/>
<path d="M525.500 498c-.4-3 1-5 3.500-5s3.900 2 3.500 5c-.5-1.800-1.300-2.600-3.500-2.600s-3 .8-3.500 2.600z" fill="#8a4a1c"/>
<circle cx="535" cy="503" r="1.700" fill="#f4c430" stroke="#a97808" stroke-width=".5"/><rect x="534.300" y="504.500" width="1.400" height="4.500" fill="#e0a818"/>
<!-- key -->
<ellipse cx="525.500" cy="529.500" rx="4.300" ry="4" fill="url(#mGold)" stroke="#c4900e" stroke-width=".7"/><circle cx="523.800" cy="529" r="1.100" fill="#fff8dc"/>
<path d="M529.500 528h6l1.500 1.500l-1.500 1.500h-1l-.8-.8l-.8.800h-1l-.8-.8l-.8.800h-1.300z" fill="url(#mGold)" stroke="#c4900e" stroke-width=".5"/>
<!-- revisiones -->
<rect x="522.500" y="546.500" width="12" height="13" fill="#f6f7f9" stroke="#6a6f78" stroke-width=".9"/>
<rect x="524.500" y="548.300" width="8" height="2.500" fill="#86c172"/>
<path d="M521.400 548h1.600M521.400 550h1.600M521.400 552h1.600M521.400 554h1.600M521.400 556h1.600M521.400 558h1.600" stroke="#3a3f47" stroke-width=".8"/>
<path d="M531 551.500c2.200 0 3 1.700 3 4c0 2.200.6 3 1.800 4.200v1h-9.600v-1c1.200-1.200 1.800-2 1.800-4.200c0-2.300.8-4 3-4z" fill="url(#mGold)" stroke="#8a6208" stroke-width=".7"/>
<ellipse cx="531" cy="561.300" rx="1.300" ry="1" fill="#222"/>
<!-- recibos -->
<use href="#rcb" x="521.500" y="572"/>
<!-- facturas -->
<path d="M522.500 597h8l3 3v10h-11z" fill="#f1f4f3" stroke="#8d9896" stroke-width=".8"/>
<path d="M524.500 600.500h4M524.500 603h7M524.500 605.500h7" stroke="#9aa5a3" stroke-width=".9" stroke-dasharray="1.500 .7"/>
<g fill="url(#mGold)" stroke="#a97808" stroke-width=".5"><rect x="527" y="608.500" width="5" height="2" rx=".7"/><rect x="531" y="609.500" width="5.500" height="2" rx=".7"/><rect x="531" y="607.500" width="5.500" height="2" rx=".7"/><rect x="531" y="605.500" width="5.500" height="2" rx=".7"/></g>
<!-- calculator -->
<rect x="524" y="621" width="10.500" height="16" rx="1" fill="#7db4f0" stroke="#3f82d6" stroke-width=".9"/>
<rect x="525.500" y="622.800" width="7.500" height="3.200" fill="#e9f3fd"/>
<path d="M525.800 629h1.800M528.400 629h1.800M531 629h1.800M525.800 631.500h1.800M528.400 631.500h1.800M531 631.500h1.800M525.800 634h1.800M528.400 634h1.800M531 634h1.800" stroke="#dceafb" stroke-width="1.400"/>
<!-- submenu icons -->
<use href="#pen" x="755" y="446"/>
<rect x="761.500" y="451.500" width="7.500" height="8" fill="#f6f7f9" stroke="#9aa1aa" stroke-width=".6"/><rect x="762.500" y="452.800" width="5.500" height="2" fill="#86c172"/><path d="M762.500 456.500h5.500M762.500 458h5.500" stroke="#a9aeb8" stroke-width=".8"/>
<use href="#pen" x="755" y="470"/>
<rect x="761.500" y="476.500" width="8" height="7.500" fill="#f4f7fc" stroke="#7a9ad0" stroke-width=".7"/><path d="M763 480l1.800 2.500l4-5.500" fill="none" stroke="#d8311e" stroke-width="1.500"/>
<use href="#rcb" x="754.500" y="493"/>
<rect x="758.500" y="518.500" width="10" height="12" fill="#f6f7f9" stroke="#9a9fa8" stroke-width=".7"/>
<rect x="763" y="520" width="5" height="2.300" fill="#86c172"/>
<path d="M755.500 518.500l2.200 6l2.200-6" fill="none" stroke="#111" stroke-width="1.700"/>
<path d="M755 527h2M755 529h2M755 531h2" stroke="#6a6f78" stroke-width=".8"/>
<circle cx="765.500" cy="528" r="4" fill="#f4b730" stroke="#c98a10" stroke-width=".8" stroke-dasharray="1.500 .6"/><path d="M763.800 528l1.300 1.300l2.300-2.500" fill="none" stroke="#c98a10" stroke-width=".8"/>
<use href="#nb" x="755" y="542"/>
<use href="#nb" x="755" y="566"/>
<use href="#nb" x="755" y="590"/>
<use href="#nb" x="755" y="614"/>
</svg>


</body>
</html>
